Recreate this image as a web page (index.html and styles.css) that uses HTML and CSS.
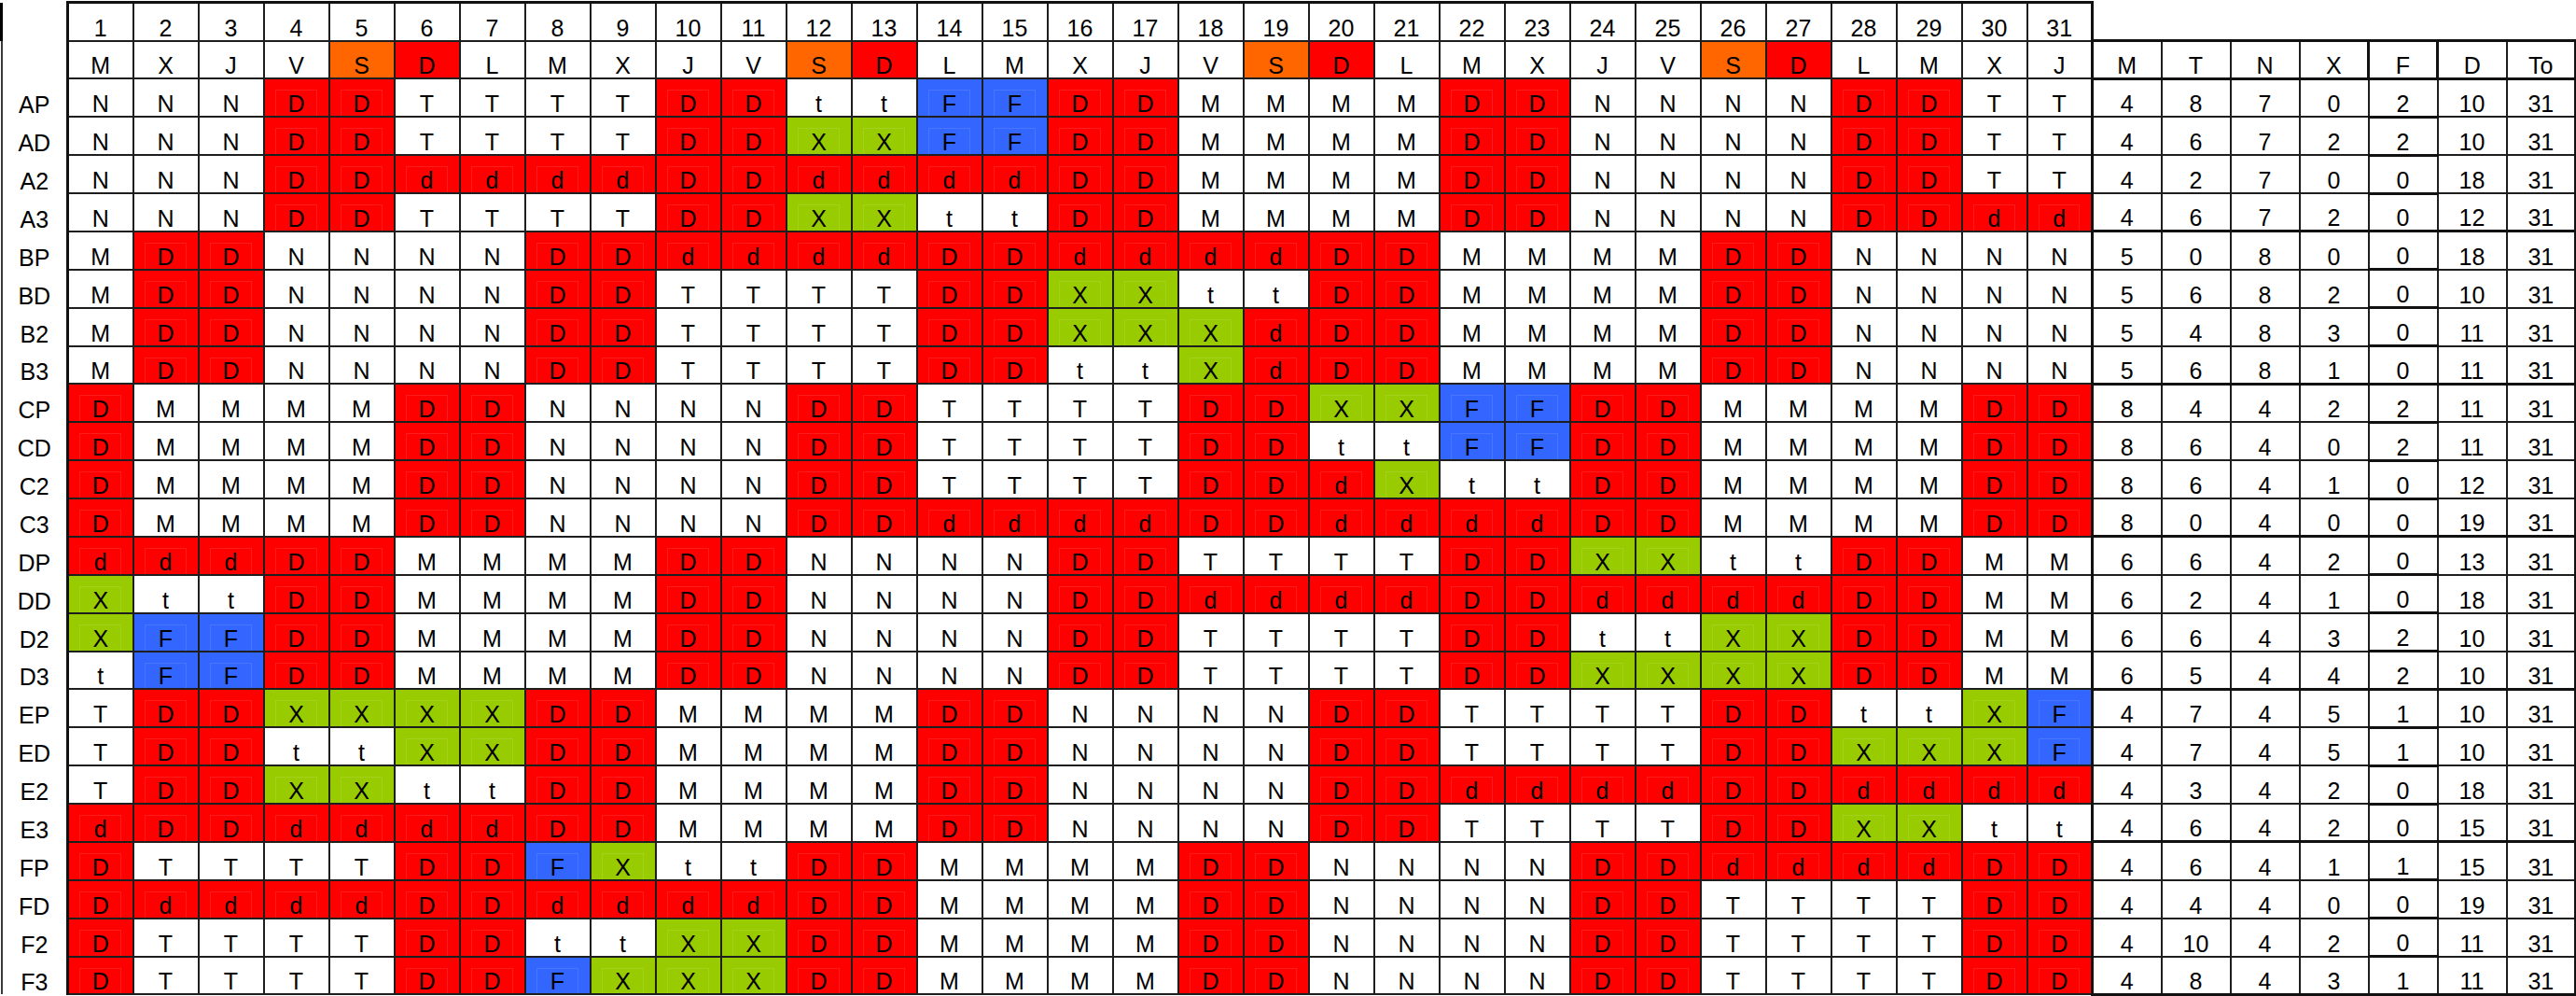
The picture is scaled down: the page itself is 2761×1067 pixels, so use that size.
FILE: index.html
```html
<!DOCTYPE html>
<html lang="es">
<head>
<meta charset="utf-8">
<title>Cuadrante</title>
<link rel="stylesheet" href="styles.css">
</head>
<body>
<table class="roster">
<colgroup>
<col class="c-lab">
<col class="c-day"><col class="c-day"><col class="c-day"><col class="c-day"><col class="c-day"><col class="c-day"><col class="c-day"><col class="c-day"><col class="c-day"><col class="c-day"><col class="c-day"><col class="c-day"><col class="c-day"><col class="c-day"><col class="c-day"><col class="c-day"><col class="c-day"><col class="c-day"><col class="c-day"><col class="c-day"><col class="c-day"><col class="c-day"><col class="c-day"><col class="c-day"><col class="c-day"><col class="c-day"><col class="c-day"><col class="c-day"><col class="c-day"><col class="c-day"><col class="c-day">
<col class="c-sum"><col class="c-sum"><col class="c-sum"><col class="c-sum"><col class="c-sum"><col class="c-sum"><col class="c-sum">
</colgroup>
<thead>
<tr class="days">
<th class="lab"></th>
<th class="num">1</th><th class="num">2</th><th class="num">3</th><th class="num">4</th><th class="num">5</th><th class="num">6</th><th class="num">7</th><th class="num">8</th><th class="num">9</th><th class="num">10</th><th class="num">11</th><th class="num">12</th><th class="num">13</th><th class="num">14</th><th class="num">15</th><th class="num">16</th><th class="num">17</th><th class="num">18</th><th class="num">19</th><th class="num">20</th><th class="num">21</th><th class="num">22</th><th class="num">23</th><th class="num">24</th><th class="num">25</th><th class="num">26</th><th class="num">27</th><th class="num">28</th><th class="num">29</th><th class="num">30</th><th class="num">31</th>
<th class="void" colspan="7"></th>
</tr>
<tr class="wd">
<th class="lab"></th>
<th>M</th><th>X</th><th>J</th><th>V</th><th class="o">S</th><th class="r">D</th><th>L</th><th>M</th><th>X</th><th>J</th><th>V</th><th class="o">S</th><th class="r">D</th><th>L</th><th>M</th><th>X</th><th>J</th><th>V</th><th class="o">S</th><th class="r">D</th><th>L</th><th>M</th><th>X</th><th>J</th><th>V</th><th class="o">S</th><th class="r">D</th><th>L</th><th>M</th><th>X</th><th>J</th>
<th class="s">M</th><th class="s">T</th><th class="s">N</th><th class="s">X</th><th class="s f">F</th><th class="s">D</th><th class="s">To</th>
</tr>
</thead>
<tbody>
<tr><th class="lab">AP</th><td>N</td><td>N</td><td>N</td><td class="r">D</td><td class="r">D</td><td>T</td><td>T</td><td>T</td><td>T</td><td class="r">D</td><td class="r">D</td><td>t</td><td>t</td><td class="b">F</td><td class="b">F</td><td class="r">D</td><td class="r">D</td><td>M</td><td>M</td><td>M</td><td>M</td><td class="r">D</td><td class="r">D</td><td>N</td><td>N</td><td>N</td><td>N</td><td class="r">D</td><td class="r">D</td><td>T</td><td>T</td><td class="s">4</td><td class="s">8</td><td class="s">7</td><td class="s">0</td><td class="s f">2</td><td class="s">10</td><td class="s">31</td></tr>
<tr><th class="lab">AD</th><td>N</td><td>N</td><td>N</td><td class="r">D</td><td class="r">D</td><td>T</td><td>T</td><td>T</td><td>T</td><td class="r">D</td><td class="r">D</td><td class="g">X</td><td class="g">X</td><td class="b">F</td><td class="b">F</td><td class="r">D</td><td class="r">D</td><td>M</td><td>M</td><td>M</td><td>M</td><td class="r">D</td><td class="r">D</td><td>N</td><td>N</td><td>N</td><td>N</td><td class="r">D</td><td class="r">D</td><td>T</td><td>T</td><td class="s">4</td><td class="s">6</td><td class="s">7</td><td class="s">2</td><td class="s f">2</td><td class="s">10</td><td class="s">31</td></tr>
<tr><th class="lab">A2</th><td>N</td><td>N</td><td>N</td><td class="r">D</td><td class="r">D</td><td class="r">d</td><td class="r">d</td><td class="r">d</td><td class="r">d</td><td class="r">D</td><td class="r">D</td><td class="r">d</td><td class="r">d</td><td class="r">d</td><td class="r">d</td><td class="r">D</td><td class="r">D</td><td>M</td><td>M</td><td>M</td><td>M</td><td class="r">D</td><td class="r">D</td><td>N</td><td>N</td><td>N</td><td>N</td><td class="r">D</td><td class="r">D</td><td>T</td><td>T</td><td class="s">4</td><td class="s">2</td><td class="s">7</td><td class="s">0</td><td class="s f">0</td><td class="s">18</td><td class="s">31</td></tr>
<tr class="ge"><th class="lab">A3</th><td>N</td><td>N</td><td>N</td><td class="r">D</td><td class="r">D</td><td>T</td><td>T</td><td>T</td><td>T</td><td class="r">D</td><td class="r">D</td><td class="g">X</td><td class="g">X</td><td>t</td><td>t</td><td class="r">D</td><td class="r">D</td><td>M</td><td>M</td><td>M</td><td>M</td><td class="r">D</td><td class="r">D</td><td>N</td><td>N</td><td>N</td><td>N</td><td class="r">D</td><td class="r">D</td><td class="r">d</td><td class="r">d</td><td class="s">4</td><td class="s">6</td><td class="s">7</td><td class="s">2</td><td class="s f">0</td><td class="s">12</td><td class="s">31</td></tr>
<tr><th class="lab">BP</th><td>M</td><td class="r">D</td><td class="r">D</td><td>N</td><td>N</td><td>N</td><td>N</td><td class="r">D</td><td class="r">D</td><td class="r">d</td><td class="r">d</td><td class="r">d</td><td class="r">d</td><td class="r">D</td><td class="r">D</td><td class="r">d</td><td class="r">d</td><td class="r">d</td><td class="r">d</td><td class="r">D</td><td class="r">D</td><td>M</td><td>M</td><td>M</td><td>M</td><td class="r">D</td><td class="r">D</td><td>N</td><td>N</td><td>N</td><td>N</td><td class="s">5</td><td class="s">0</td><td class="s">8</td><td class="s">0</td><td class="s f">0</td><td class="s">18</td><td class="s">31</td></tr>
<tr><th class="lab">BD</th><td>M</td><td class="r">D</td><td class="r">D</td><td>N</td><td>N</td><td>N</td><td>N</td><td class="r">D</td><td class="r">D</td><td>T</td><td>T</td><td>T</td><td>T</td><td class="r">D</td><td class="r">D</td><td class="g">X</td><td class="g">X</td><td>t</td><td>t</td><td class="r">D</td><td class="r">D</td><td>M</td><td>M</td><td>M</td><td>M</td><td class="r">D</td><td class="r">D</td><td>N</td><td>N</td><td>N</td><td>N</td><td class="s">5</td><td class="s">6</td><td class="s">8</td><td class="s">2</td><td class="s f">0</td><td class="s">10</td><td class="s">31</td></tr>
<tr><th class="lab">B2</th><td>M</td><td class="r">D</td><td class="r">D</td><td>N</td><td>N</td><td>N</td><td>N</td><td class="r">D</td><td class="r">D</td><td>T</td><td>T</td><td>T</td><td>T</td><td class="r">D</td><td class="r">D</td><td class="g">X</td><td class="g">X</td><td class="g">X</td><td class="r">d</td><td class="r">D</td><td class="r">D</td><td>M</td><td>M</td><td>M</td><td>M</td><td class="r">D</td><td class="r">D</td><td>N</td><td>N</td><td>N</td><td>N</td><td class="s">5</td><td class="s">4</td><td class="s">8</td><td class="s">3</td><td class="s f">0</td><td class="s">11</td><td class="s">31</td></tr>
<tr class="ge"><th class="lab">B3</th><td>M</td><td class="r">D</td><td class="r">D</td><td>N</td><td>N</td><td>N</td><td>N</td><td class="r">D</td><td class="r">D</td><td>T</td><td>T</td><td>T</td><td>T</td><td class="r">D</td><td class="r">D</td><td>t</td><td>t</td><td class="g">X</td><td class="r">d</td><td class="r">D</td><td class="r">D</td><td>M</td><td>M</td><td>M</td><td>M</td><td class="r">D</td><td class="r">D</td><td>N</td><td>N</td><td>N</td><td>N</td><td class="s">5</td><td class="s">6</td><td class="s">8</td><td class="s">1</td><td class="s f">0</td><td class="s">11</td><td class="s">31</td></tr>
<tr><th class="lab">CP</th><td class="r">D</td><td>M</td><td>M</td><td>M</td><td>M</td><td class="r">D</td><td class="r">D</td><td>N</td><td>N</td><td>N</td><td>N</td><td class="r">D</td><td class="r">D</td><td>T</td><td>T</td><td>T</td><td>T</td><td class="r">D</td><td class="r">D</td><td class="g">X</td><td class="g">X</td><td class="b">F</td><td class="b">F</td><td class="r">D</td><td class="r">D</td><td>M</td><td>M</td><td>M</td><td>M</td><td class="r">D</td><td class="r">D</td><td class="s">8</td><td class="s">4</td><td class="s">4</td><td class="s">2</td><td class="s f">2</td><td class="s">11</td><td class="s">31</td></tr>
<tr><th class="lab">CD</th><td class="r">D</td><td>M</td><td>M</td><td>M</td><td>M</td><td class="r">D</td><td class="r">D</td><td>N</td><td>N</td><td>N</td><td>N</td><td class="r">D</td><td class="r">D</td><td>T</td><td>T</td><td>T</td><td>T</td><td class="r">D</td><td class="r">D</td><td>t</td><td>t</td><td class="b">F</td><td class="b">F</td><td class="r">D</td><td class="r">D</td><td>M</td><td>M</td><td>M</td><td>M</td><td class="r">D</td><td class="r">D</td><td class="s">8</td><td class="s">6</td><td class="s">4</td><td class="s">0</td><td class="s f">2</td><td class="s">11</td><td class="s">31</td></tr>
<tr><th class="lab">C2</th><td class="r">D</td><td>M</td><td>M</td><td>M</td><td>M</td><td class="r">D</td><td class="r">D</td><td>N</td><td>N</td><td>N</td><td>N</td><td class="r">D</td><td class="r">D</td><td>T</td><td>T</td><td>T</td><td>T</td><td class="r">D</td><td class="r">D</td><td class="r">d</td><td class="g">X</td><td>t</td><td>t</td><td class="r">D</td><td class="r">D</td><td>M</td><td>M</td><td>M</td><td>M</td><td class="r">D</td><td class="r">D</td><td class="s">8</td><td class="s">6</td><td class="s">4</td><td class="s">1</td><td class="s f">0</td><td class="s">12</td><td class="s">31</td></tr>
<tr class="ge"><th class="lab">C3</th><td class="r">D</td><td>M</td><td>M</td><td>M</td><td>M</td><td class="r">D</td><td class="r">D</td><td>N</td><td>N</td><td>N</td><td>N</td><td class="r">D</td><td class="r">D</td><td class="r">d</td><td class="r">d</td><td class="r">d</td><td class="r">d</td><td class="r">D</td><td class="r">D</td><td class="r">d</td><td class="r">d</td><td class="r">d</td><td class="r">d</td><td class="r">D</td><td class="r">D</td><td>M</td><td>M</td><td>M</td><td>M</td><td class="r">D</td><td class="r">D</td><td class="s">8</td><td class="s">0</td><td class="s">4</td><td class="s">0</td><td class="s f">0</td><td class="s">19</td><td class="s">31</td></tr>
<tr><th class="lab">DP</th><td class="r">d</td><td class="r">d</td><td class="r">d</td><td class="r">D</td><td class="r">D</td><td>M</td><td>M</td><td>M</td><td>M</td><td class="r">D</td><td class="r">D</td><td>N</td><td>N</td><td>N</td><td>N</td><td class="r">D</td><td class="r">D</td><td>T</td><td>T</td><td>T</td><td>T</td><td class="r">D</td><td class="r">D</td><td class="g">X</td><td class="g">X</td><td>t</td><td>t</td><td class="r">D</td><td class="r">D</td><td>M</td><td>M</td><td class="s">6</td><td class="s">6</td><td class="s">4</td><td class="s">2</td><td class="s f">0</td><td class="s">13</td><td class="s">31</td></tr>
<tr><th class="lab">DD</th><td class="g">X</td><td>t</td><td>t</td><td class="r">D</td><td class="r">D</td><td>M</td><td>M</td><td>M</td><td>M</td><td class="r">D</td><td class="r">D</td><td>N</td><td>N</td><td>N</td><td>N</td><td class="r">D</td><td class="r">D</td><td class="r">d</td><td class="r">d</td><td class="r">d</td><td class="r">d</td><td class="r">D</td><td class="r">D</td><td class="r">d</td><td class="r">d</td><td class="r">d</td><td class="r">d</td><td class="r">D</td><td class="r">D</td><td>M</td><td>M</td><td class="s">6</td><td class="s">2</td><td class="s">4</td><td class="s">1</td><td class="s f">0</td><td class="s">18</td><td class="s">31</td></tr>
<tr><th class="lab">D2</th><td class="g">X</td><td class="b">F</td><td class="b">F</td><td class="r">D</td><td class="r">D</td><td>M</td><td>M</td><td>M</td><td>M</td><td class="r">D</td><td class="r">D</td><td>N</td><td>N</td><td>N</td><td>N</td><td class="r">D</td><td class="r">D</td><td>T</td><td>T</td><td>T</td><td>T</td><td class="r">D</td><td class="r">D</td><td>t</td><td>t</td><td class="g">X</td><td class="g">X</td><td class="r">D</td><td class="r">D</td><td>M</td><td>M</td><td class="s">6</td><td class="s">6</td><td class="s">4</td><td class="s">3</td><td class="s f">2</td><td class="s">10</td><td class="s">31</td></tr>
<tr class="ge"><th class="lab">D3</th><td>t</td><td class="b">F</td><td class="b">F</td><td class="r">D</td><td class="r">D</td><td>M</td><td>M</td><td>M</td><td>M</td><td class="r">D</td><td class="r">D</td><td>N</td><td>N</td><td>N</td><td>N</td><td class="r">D</td><td class="r">D</td><td>T</td><td>T</td><td>T</td><td>T</td><td class="r">D</td><td class="r">D</td><td class="g">X</td><td class="g">X</td><td class="g">X</td><td class="g">X</td><td class="r">D</td><td class="r">D</td><td>M</td><td>M</td><td class="s">6</td><td class="s">5</td><td class="s">4</td><td class="s">4</td><td class="s f">2</td><td class="s">10</td><td class="s">31</td></tr>
<tr><th class="lab">EP</th><td>T</td><td class="r">D</td><td class="r">D</td><td class="g">X</td><td class="g">X</td><td class="g">X</td><td class="g">X</td><td class="r">D</td><td class="r">D</td><td>M</td><td>M</td><td>M</td><td>M</td><td class="r">D</td><td class="r">D</td><td>N</td><td>N</td><td>N</td><td>N</td><td class="r">D</td><td class="r">D</td><td>T</td><td>T</td><td>T</td><td>T</td><td class="r">D</td><td class="r">D</td><td>t</td><td>t</td><td class="g">X</td><td class="b">F</td><td class="s">4</td><td class="s">7</td><td class="s">4</td><td class="s">5</td><td class="s f">1</td><td class="s">10</td><td class="s">31</td></tr>
<tr><th class="lab">ED</th><td>T</td><td class="r">D</td><td class="r">D</td><td>t</td><td>t</td><td class="g">X</td><td class="g">X</td><td class="r">D</td><td class="r">D</td><td>M</td><td>M</td><td>M</td><td>M</td><td class="r">D</td><td class="r">D</td><td>N</td><td>N</td><td>N</td><td>N</td><td class="r">D</td><td class="r">D</td><td>T</td><td>T</td><td>T</td><td>T</td><td class="r">D</td><td class="r">D</td><td class="g">X</td><td class="g">X</td><td class="g">X</td><td class="b">F</td><td class="s">4</td><td class="s">7</td><td class="s">4</td><td class="s">5</td><td class="s f">1</td><td class="s">10</td><td class="s">31</td></tr>
<tr><th class="lab">E2</th><td>T</td><td class="r">D</td><td class="r">D</td><td class="g">X</td><td class="g">X</td><td>t</td><td>t</td><td class="r">D</td><td class="r">D</td><td>M</td><td>M</td><td>M</td><td>M</td><td class="r">D</td><td class="r">D</td><td>N</td><td>N</td><td>N</td><td>N</td><td class="r">D</td><td class="r">D</td><td class="r">d</td><td class="r">d</td><td class="r">d</td><td class="r">d</td><td class="r">D</td><td class="r">D</td><td class="r">d</td><td class="r">d</td><td class="r">d</td><td class="r">d</td><td class="s">4</td><td class="s">3</td><td class="s">4</td><td class="s">2</td><td class="s f">0</td><td class="s">18</td><td class="s">31</td></tr>
<tr class="ge"><th class="lab">E3</th><td class="r">d</td><td class="r">D</td><td class="r">D</td><td class="r">d</td><td class="r">d</td><td class="r">d</td><td class="r">d</td><td class="r">D</td><td class="r">D</td><td>M</td><td>M</td><td>M</td><td>M</td><td class="r">D</td><td class="r">D</td><td>N</td><td>N</td><td>N</td><td>N</td><td class="r">D</td><td class="r">D</td><td>T</td><td>T</td><td>T</td><td>T</td><td class="r">D</td><td class="r">D</td><td class="g">X</td><td class="g">X</td><td>t</td><td>t</td><td class="s">4</td><td class="s">6</td><td class="s">4</td><td class="s">2</td><td class="s f">0</td><td class="s">15</td><td class="s">31</td></tr>
<tr><th class="lab">FP</th><td class="r">D</td><td>T</td><td>T</td><td>T</td><td>T</td><td class="r">D</td><td class="r">D</td><td class="b">F</td><td class="g">X</td><td>t</td><td>t</td><td class="r">D</td><td class="r">D</td><td>M</td><td>M</td><td>M</td><td>M</td><td class="r">D</td><td class="r">D</td><td>N</td><td>N</td><td>N</td><td>N</td><td class="r">D</td><td class="r">D</td><td class="r">d</td><td class="r">d</td><td class="r">d</td><td class="r">d</td><td class="r">D</td><td class="r">D</td><td class="s">4</td><td class="s">6</td><td class="s">4</td><td class="s">1</td><td class="s f">1</td><td class="s">15</td><td class="s">31</td></tr>
<tr><th class="lab">FD</th><td class="r">D</td><td class="r">d</td><td class="r">d</td><td class="r">d</td><td class="r">d</td><td class="r">D</td><td class="r">D</td><td class="r">d</td><td class="r">d</td><td class="r">d</td><td class="r">d</td><td class="r">D</td><td class="r">D</td><td>M</td><td>M</td><td>M</td><td>M</td><td class="r">D</td><td class="r">D</td><td>N</td><td>N</td><td>N</td><td>N</td><td class="r">D</td><td class="r">D</td><td>T</td><td>T</td><td>T</td><td>T</td><td class="r">D</td><td class="r">D</td><td class="s">4</td><td class="s">4</td><td class="s">4</td><td class="s">0</td><td class="s f">0</td><td class="s">19</td><td class="s">31</td></tr>
<tr><th class="lab">F2</th><td class="r">D</td><td>T</td><td>T</td><td>T</td><td>T</td><td class="r">D</td><td class="r">D</td><td>t</td><td>t</td><td class="g">X</td><td class="g">X</td><td class="r">D</td><td class="r">D</td><td>M</td><td>M</td><td>M</td><td>M</td><td class="r">D</td><td class="r">D</td><td>N</td><td>N</td><td>N</td><td>N</td><td class="r">D</td><td class="r">D</td><td>T</td><td>T</td><td>T</td><td>T</td><td class="r">D</td><td class="r">D</td><td class="s">4</td><td class="s">10</td><td class="s">4</td><td class="s">2</td><td class="s f">0</td><td class="s">11</td><td class="s">31</td></tr>
<tr class="ge"><th class="lab">F3</th><td class="r">D</td><td>T</td><td>T</td><td>T</td><td>T</td><td class="r">D</td><td class="r">D</td><td class="b">F</td><td class="g">X</td><td class="g">X</td><td class="g">X</td><td class="r">D</td><td class="r">D</td><td>M</td><td>M</td><td>M</td><td>M</td><td class="r">D</td><td class="r">D</td><td>N</td><td>N</td><td>N</td><td>N</td><td class="r">D</td><td class="r">D</td><td>T</td><td>T</td><td>T</td><td>T</td><td class="r">D</td><td class="r">D</td><td class="s">4</td><td class="s">8</td><td class="s">4</td><td class="s">3</td><td class="s f">1</td><td class="s">11</td><td class="s">31</td></tr>
</tbody>
</table>
</body>
</html>
```

FILE: styles.css
```css
html, body {
  margin: 0;
  padding: 0;
  background: #ffffff;
}

body {
  font-family: "Liberation Sans", Arial, Helvetica, sans-serif;
  color: #000000;
}

.roster {
  border-collapse: collapse;
  table-layout: fixed;
  width: 2759px;
  margin-top: 1px;
  font-size: 25px;
}

.roster .c-lab { width: 71px; }
.roster .c-day { width: 70px; }
.roster .c-sum { width: 74px; }

.roster th,
.roster td {
  border: 2px solid #1e1e1e;
  padding: 0;
  text-align: center;
  vertical-align: bottom;
  line-height: 1;
  font-weight: 400;
  white-space: nowrap;
  overflow: hidden;
}

.roster tr { height: 40.88px; }
.roster tr.days { height: 41px; }

/* row labels, no grid */
.roster .lab {
  border-top: 0;
  border-bottom: 0;
  border-left: 2px solid #3a3a3a;
}
.roster tr.days .lab { border-left: 3px solid #000; }

/* day numbers */
.roster tr.days .num { border-top: 3px solid #111; }
.roster tr.days .num:nth-child(32) { border-right: 3px solid #111; }
.roster .void { border-top: 0; border-right: 0; border-bottom: 0; }

/* first day column */
.roster tr > :nth-child(2) { border-left: 3px solid #111; }

/* summary block */
.roster tr > :nth-child(33) { border-left: 3px solid #111; }
.roster tr > :nth-child(39) { border-right: 3px solid #111; }
.roster thead .s { border-top: 3px solid #111; border-bottom: 3px solid #111; }
.roster thead .f { border-left: 3px solid #111; border-right: 3px solid #111; }
.roster tbody .f { border-bottom: 3px solid #111; }
.roster tr.ge .s { border-bottom: 3px solid #111; }

/* shift colours */
.roster .r { background: #ff0000; }
.roster .g { background: #99cc00; }
.roster .b { background: #3366ff; }
.roster .o { background: #ff6600; }

.roster tbody .r,
.roster tbody .g,
.roster tbody .b { position: relative; }

.roster tbody .r::before,
.roster tbody .g::before,
.roster tbody .b::before {
  content: "";
  position: absolute;
  left: 11px;
  right: 12px;
  top: 11px;
  bottom: 0;
  border: 1px solid rgba(255, 255, 255, 0.11);
  border-bottom: 0;
}
```
